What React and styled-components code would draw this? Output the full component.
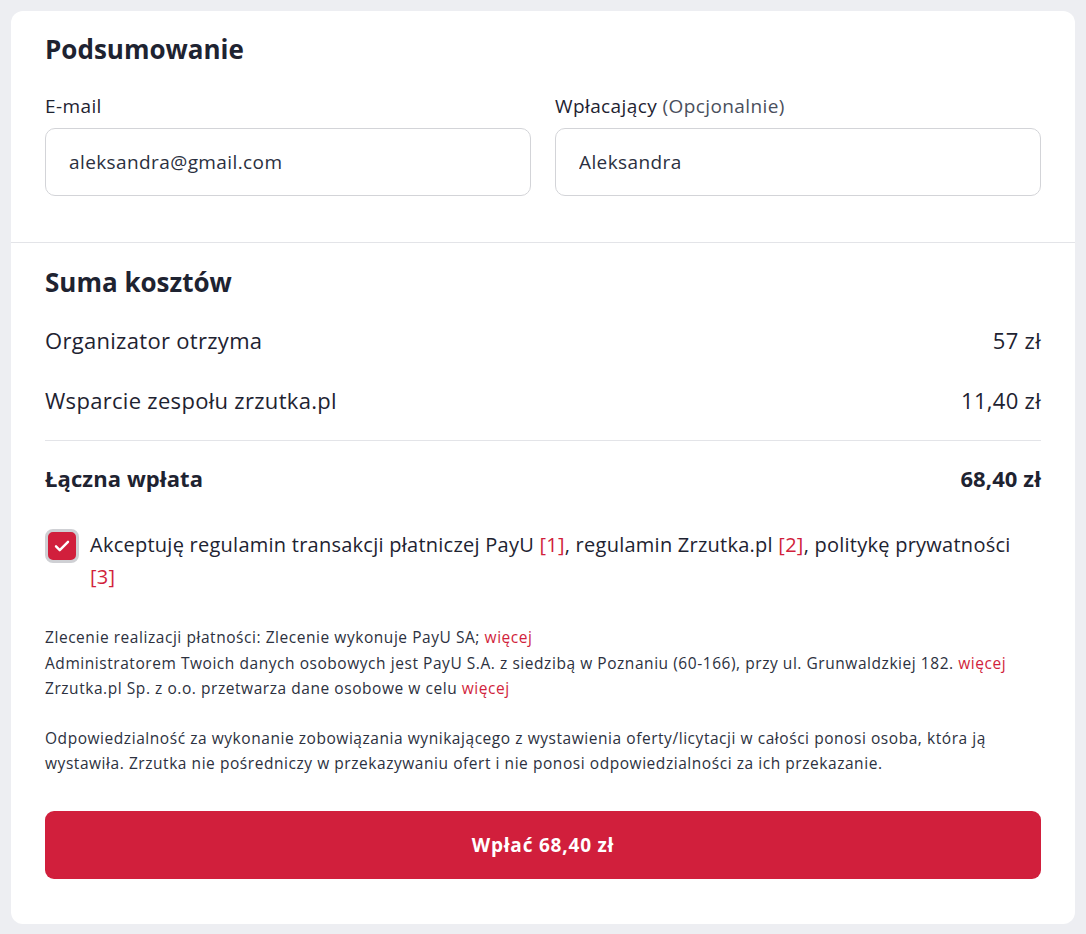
import styled, { createGlobalStyle } from "styled-components";

const GlobalStyle = createGlobalStyle`
  body {
    margin: 0;
    background: #edeef2;
    font-family: "Open Sans", "Noto Sans", sans-serif;
    color: #1e2331;
  }
`;

const Page = styled.div`
  padding: 11px 11px 11px 11px;
`;

const Card = styled.div`
  background: #fff;
  border-radius: 12px;
  overflow: hidden;
`;

const Section = styled.section`
  padding: ${(p) => p.$pad};
  border-bottom: ${(p) => (p.$divided ? "1px solid #e3e4e8" : "none")};
`;

const Title = styled.h2`
  margin: 0;
  font-size: 26px;
  line-height: 32px;
  font-weight: 700;
`;

const Fields = styled.div`
  display: grid;
  grid-template-columns: 1fr 1fr;
  gap: 24px;
  margin-top: 29px;
`;

const Field = styled.label`
  display: flex;
  flex-direction: column;
  gap: 10px;
`;

const Label = styled.span`
  font-size: 19px;
  line-height: 24px;
  letter-spacing: 0.4px;
  span {
    color: #4a4f5c;
  }
`;

const Input = styled.input`
  box-sizing: border-box;
  height: 68px;
  border: 1px solid #d3d4d8;
  border-radius: 10px;
  padding: 0 23px;
  font: inherit;
  font-size: 19px;
  letter-spacing: 0.4px;
  color: #2b3040;
  outline: none;
`;

const Row = styled.div`
  display: flex;
  justify-content: space-between;
  font-size: 22px;
  line-height: 30px;
  letter-spacing: ${(p) => (p.$bold ? "0.1px" : "0.3px")};
  font-weight: ${(p) => (p.$bold ? 700 : 400)};
  margin-top: ${(p) => p.$top}px;
`;

const Rule = styled.hr`
  border: 0;
  border-top: 1px solid #e3e4e8;
  margin: 25px 0 0;
`;

const Consent = styled.div`
  display: flex;
  align-items: flex-start;
  gap: 11px;
  margin-top: 36px;
  font-size: 20px;
  line-height: 32px;
  letter-spacing: 0.25px;
`;

const ConsentText = styled.span`
  padding-right: 24px;
`;

const Check = styled.span`
  flex: none;
  box-sizing: border-box;
  width: 34px;
  height: 34px;
  border-radius: 8px;
  border: 3px solid #cfd0d4;
  background: #d11f3c;
  display: flex;
  align-items: center;
  justify-content: center;
`;

const Link = styled.a`
  color: #d11f3c;
  text-decoration: none;
`;

const Fine = styled.p`
  margin: ${(p) => p.$top}px 0 0;
  font-size: 15.5px;
  line-height: 25.5px;
  letter-spacing: 0.55px;
  color: #2c3140;
`;

const PayButton = styled.button`
  display: block;
  width: 100%;
  height: 68px;
  margin-top: 34px;
  border: 0;
  border-radius: 9px;
  background: #d11f3c;
  color: #fff;
  font: inherit;
  font-size: 19px;
  letter-spacing: 0.8px;
  font-weight: 700;
  cursor: pointer;
`;

export default function App() {
  return (
    <Page>
      <GlobalStyle />
      <Card>
        <Section $pad="22px 34px 46px" $divided>
          <Title>Podsumowanie</Title>
          <Fields>
            <Field>
              <Label>E-mail</Label>
              <Input defaultValue="aleksandra@gmail.com" />
            </Field>
            <Field>
              <Label>
                Wpłacający <span>(Opcjonalnie)</span>
              </Label>
              <Input defaultValue="Aleksandra" />
            </Field>
          </Fields>
        </Section>
        <Section $pad="23px 34px 45px">
          <Title>Suma kosztów</Title>
          <Row $top={27}>
            <span>Organizator otrzyma</span>
            <span>57 zł</span>
          </Row>
          <Row $top={30}>
            <span>Wsparcie zespołu zrzutka.pl</span>
            <span>11,40 zł</span>
          </Row>
          <Rule />
          <Row $bold $top={22}>
            <span>Łączna wpłata</span>
            <span>68,40 zł</span>
          </Row>
          <Consent>
            <Check>
              <svg width="18" height="18" viewBox="0 0 24 24" fill="none">
                <path
                  d="M4 12.5l5 5L20 6.5"
                  stroke="#fff"
                  strokeWidth="3.2"
                  strokeLinecap="round"
                  strokeLinejoin="round"
                />
              </svg>
            </Check>
            <ConsentText>
              Akceptuję regulamin transakcji płatniczej PayU <Link href="#">[1]</Link>,
              regulamin Zrzutka.pl <Link href="#">[2]</Link>, politykę prywatności{" "}
              <Link href="#">[3]</Link>
            </ConsentText>
          </Consent>
          <Fine $top={32}>
            Zlecenie realizacji płatności: Zlecenie wykonuje PayU SA; <Link href="#">więcej</Link>
            <br />
            Administratorem Twoich danych osobowych jest PayU S.A. z siedzibą w Poznaniu (60-166), przy
            ul. Grunwaldzkiej 182. <Link href="#">więcej</Link>
            <br />
            Zrzutka.pl Sp. z o.o. przetwarza dane osobowe w celu <Link href="#">więcej</Link>
          </Fine>
          <Fine $top={24}>
            Odpowiedzialność za wykonanie zobowiązania wynikającego z wystawienia oferty/licytacji w
            całości ponosi osoba, która ją wystawiła. Zrzutka nie pośredniczy w przekazywaniu ofert i nie
            ponosi odpowiedzialności za ich przekazanie.
          </Fine>
          <PayButton>Wpłać 68,40 zł</PayButton>
        </Section>
      </Card>
    </Page>
  );
}
